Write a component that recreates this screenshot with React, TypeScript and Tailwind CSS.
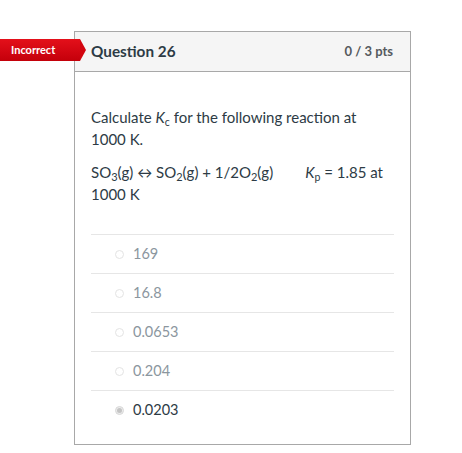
const answers = [
  { text: "169", selected: false },
  { text: "16.8", selected: false },
  { text: "0.0653", selected: false },
  { text: "0.204", selected: false },
  { text: "0.0203", selected: true },
];

const App = () => {
  return (
    <div className="relative min-h-screen bg-white pt-[31px] font-['Lato',_'Open_Sans',_sans-serif]">
      {/* Incorrect banner */}
      <div className="absolute left-0 top-[39px] flex h-[22px] items-center">
        <div className="flex h-full w-[80px] items-center bg-gradient-to-b from-[#e4101a] to-[#c4000a] pl-[11px] text-[11px] font-bold text-white">
          Incorrect
        </div>
        <div className="h-0 w-0 border-y-[11px] border-l-[6px] border-y-transparent border-l-[#d3060f]" />
      </div>

      {/* Question card */}
      <div className="ml-[74px] w-[337px] border border-[#a8a8a8]">
        <div className="flex h-[40px] items-center justify-between border-b border-[#a8a8a8] bg-[#f5f5f5] pl-[16px] pr-[17px]">
          <span className="text-[15.3px] font-bold text-[#2d3b45]">Question 26</span>
          <span className="text-[13px] font-bold text-[#555a5e]">0 / 3 pts</span>
        </div>

        <div className="px-[16px] pb-[15px] pt-[34px] text-[14.5px] leading-[22px] text-[#2d3b45]">
          <div className="text-[15px]">
            <p className="w-[290px]">
              Calculate <i>K</i>
              <sub className="text-[10.5px] leading-none">c</sub> for the following reaction at 1000 K.
            </p>
            <p className="mt-[11px] w-[306px]">
              SO<sub className="text-[11px] leading-none">3</sub>(g) ↔ SO
              <sub className="text-[11px] leading-none">2</sub>(g) + 1/2O
              <sub className="text-[11px] leading-none">2</sub>(g)
              <span className="inline-block w-[32px]" />
              <i>K</i>
              <sub className="text-[10.5px] leading-none">p</sub> = 1.85 at 1000 K
            </p>
          </div>

          <div className="mt-[29px]">
            {answers.map((a) => (
              <div
                key={a.text}
                className="flex h-[39px] items-center border-t border-[#e6e6e6] pl-[24px]"
              >
                <span
                  className={
                    a.selected
                      ? "mr-[9px] flex h-[9px] w-[9px] items-center justify-center rounded-full border border-[#d8d8d8] bg-[#ececec]"
                      : "mr-[9px] h-[9px] w-[9px] rounded-full border border-[#e3e3e3] bg-white"
                  }
                >
                  {a.selected && <span className="h-[5px] w-[5px] rounded-full bg-[#c4c4c4]" />}
                </span>
                <span className={a.selected ? "text-[#2d3b45]" : "text-[#8b969e]"}>{a.text}</span>
              </div>
            ))}
          </div>
        </div>
      </div>
    </div>
  );
};

export default App;
